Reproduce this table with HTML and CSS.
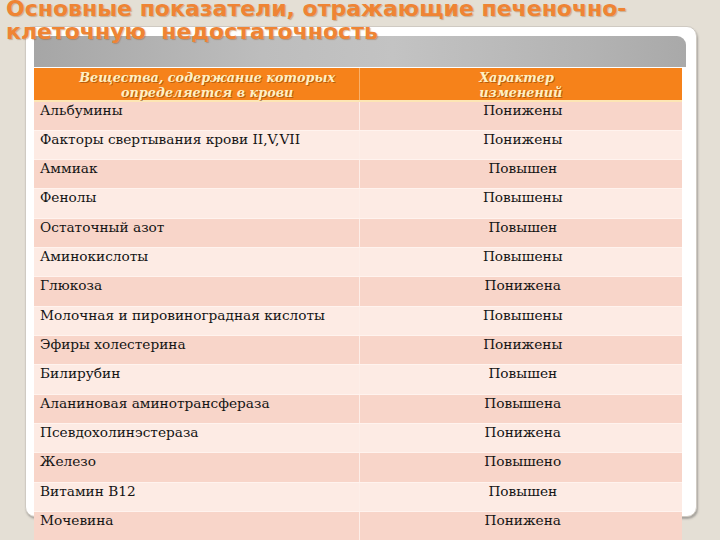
FILE: index.html
```html
<!DOCTYPE html>
<html lang="ru">
<head>
<meta charset="utf-8">
<title>Печеночно-клеточная недостаточность</title>
<link rel="stylesheet" href="styles.css">
</head>
<body>
<div class="page">
  <h1 class="title">Основные показатели, отражающие печеночно-<br>клеточную &nbsp;недостаточность</h1>
  <div class="slide">
    <div class="band"></div>
    <table class="grid">
      <thead>
        <tr>
          <th class="c1"><span>Вещества, содержание которых<br>определяется в крови</span></th>
          <th class="c2"><span>Характер<br>изменений</span></th>
        </tr>
      </thead>
      <tbody>
        <tr><td class="c1">Альбумины</td><td class="c2">Понижены</td></tr>
        <tr><td class="c1">Факторы свертывания крови II,V,VII</td><td class="c2">Понижены</td></tr>
        <tr><td class="c1">Аммиак</td><td class="c2">Повышен</td></tr>
        <tr><td class="c1">Фенолы</td><td class="c2">Повышены</td></tr>
        <tr><td class="c1">Остаточный азот</td><td class="c2">Повышен</td></tr>
        <tr><td class="c1">Аминокислоты</td><td class="c2">Повышены</td></tr>
        <tr><td class="c1">Глюкоза</td><td class="c2">Понижена</td></tr>
        <tr><td class="c1">Молочная и пировиноградная кислоты</td><td class="c2">Повышены</td></tr>
        <tr><td class="c1">Эфиры холестерина</td><td class="c2">Понижены</td></tr>
        <tr><td class="c1">Билирубин</td><td class="c2">Повышен</td></tr>
        <tr><td class="c1">Аланиновая аминотрансфераза</td><td class="c2">Повышена</td></tr>
        <tr><td class="c1">Псевдохолинэстераза</td><td class="c2">Понижена</td></tr>
        <tr><td class="c1">Железо</td><td class="c2">Повышено</td></tr>
        <tr><td class="c1">Витамин В12</td><td class="c2">Повышен</td></tr>
        <tr><td class="c1">Мочевина</td><td class="c2">Понижена</td></tr>
      </tbody>
    </table>
  </div>
</div>
</body>
</html>
```

FILE: styles.css
```css
html, body {
  margin: 0;
  padding: 0;
}
body {
  background: #e4dfd5;
  width: 720px;
  height: 540px;
  overflow: hidden;
}
.page {
  position: relative;
  width: 720px;
  height: 540px;
  padding-top: 26px;
  box-sizing: border-box;
}
.title {
  position: absolute;
  top: -3px;
  left: 6px;
  margin: 0;
  z-index: 2;
  font-family: "DejaVu Sans", "Liberation Sans", sans-serif;
  font-weight: bold;
  font-size: 22px;
  line-height: 23px;
  color: #ef8434;
  text-shadow: 1px 1px 1px rgba(150, 80, 20, 0.35);
  white-space: nowrap;
}
.slide {
  margin-left: 25px;
  width: 672px;
  height: 491px;
  box-sizing: border-box;
  padding: 9px 12px 0 8px;
  background: #ffffff;
  border: 1px solid #cfcac2;
  border-radius: 8px 10px 10px 10px;
  box-shadow: 1px 2px 2px rgba(90, 90, 90, 0.45);
}
.band {
  height: 31px;
  width: 652px;
  border-radius: 0 9px 0 0;
  background: linear-gradient(to right, #a6a6a6 0%, #bdbdbd 35%, #c3c3c3 55%, #b3b3b3 85%, #a9a9a9 100%);
}
.grid {
  margin-top: 1px;
  width: 648px;
  border-collapse: collapse;
  table-layout: fixed;
  font-family: "DejaVu Serif", "Liberation Serif", serif;
  font-size: 13.7px;
  color: #141414;
}
.grid th {
  height: 33px;
  box-sizing: border-box;
  background: #f6821a;
  border-bottom: 2px solid #fde6b4;
  padding: 2px 0 0 0;
  vertical-align: top;
  font-weight: bold;
  font-style: italic;
  font-size: 12.8px;
  line-height: 15px;
  color: #fdf0c4;
  text-shadow: 1px 1px 0 rgba(130, 60, 0, 0.55);
}
.grid th span {
  display: inline-block;
  text-align: left;
}
.grid th.c1 span {
  text-align: center;
}
.grid th.c1 {
  width: 325px;
  padding-left: 22px;
  border-right: 1px solid #f9b06a;
}
.grid th.c2 {
  text-align: center;
}
.grid td {
  height: 29.33px;
  box-sizing: border-box;
  padding: 1px 0 0 6px;
  vertical-align: top;
  line-height: 15px;
  border-bottom: 1px solid #fff3ee;
  white-space: nowrap;
}
.grid td.c1 {
  border-right: 1px solid #fdeee8;
}
.grid td.c2 {
  text-align: center;
  padding-left: 4px;
}
.grid tbody tr:nth-child(odd) td {
  background: #f8d5c9;
}
.grid tbody tr:nth-child(even) td {
  background: #fdebe4;
}
```
